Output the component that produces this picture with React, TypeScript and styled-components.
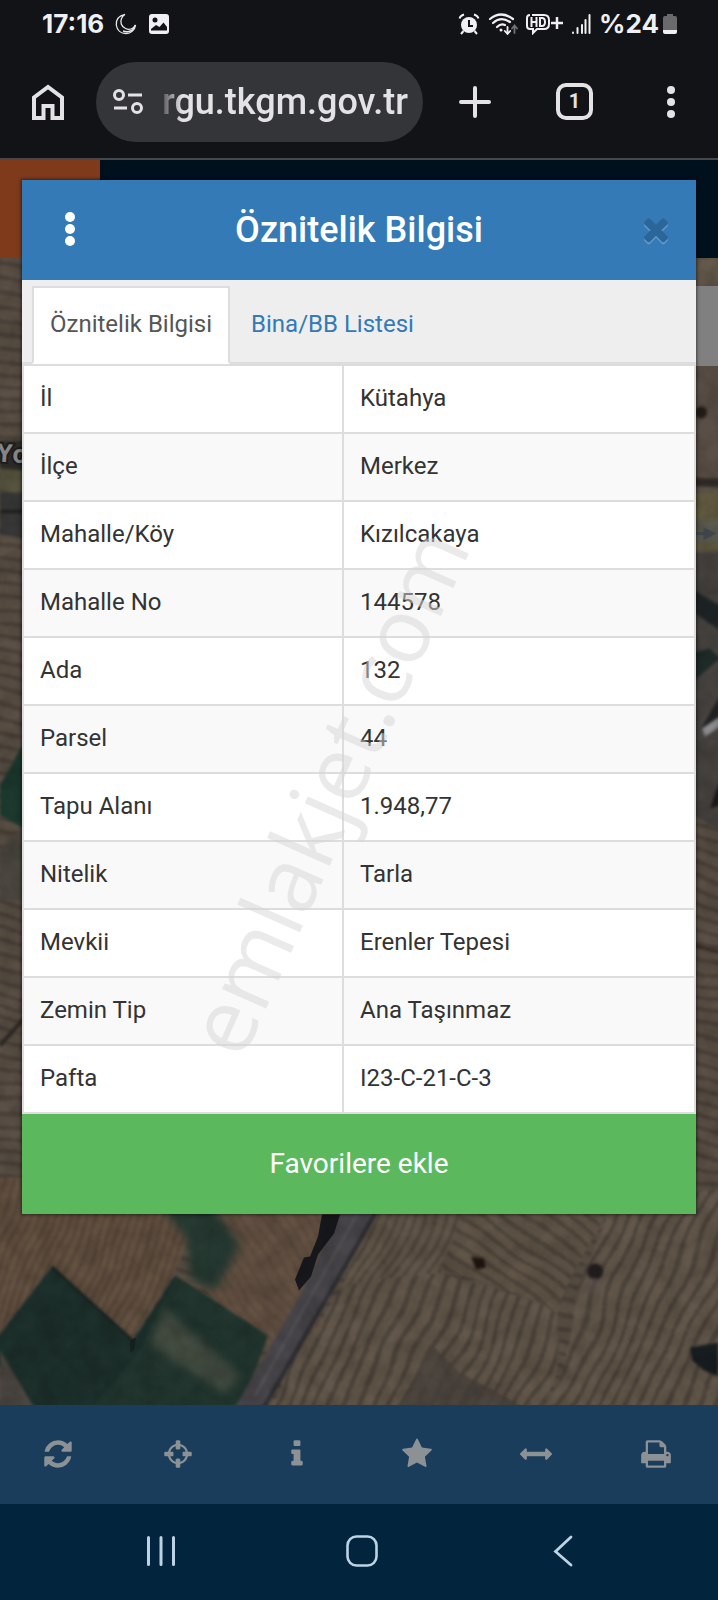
import { FC } from "react"
import styled, { createGlobalStyle } from 'styled-components';

type TProps = {
    d: string
    size?: number
}

const rows = [
    ['İl', 'Kütahya'],
    ['İlçe', 'Merkez'],
    ['Mahalle/Köy', 'Kızılcakaya'],
    ['Mahalle No', '144578'],
    ['Ada', '132'],
    ['Parsel', '44'],
    ['Tapu Alanı', '1.948,77'],
    ['Nitelik', 'Tarla'],
    ['Mevkii', 'Erenler Tepesi'],
    ['Zemin Tip', 'Ana Taşınmaz'],
    ['Pafta', 'I23-C-21-C-3'],
]

const closePath = "M1490 1322q0 40-28 68l-136 136q-28 28-68 28t-68-28l-294-294-294 294q-28 28-68 28t-68-28l-136-136q-28-28-28-68t28-68l294-294-294-294q-28-28-28-68t28-68l136-136q28-28 68-28t68 28l294 294 294-294q28-28 68-28t68 28l136 136q28 28 28 68t-28 68l-294 294 294 294q28 28 28 68z"

const tools = [
    { name: 'Yenile', d: "M1639 1056q0 5-1 7-64 268-268 434.5t-478 166.5q-146 0-282.5-55t-243.5-157l-129 129q-19 19-45 19t-45-19-19-45v-448q0-26 19-45t45-19h448q26 0 45 19t19 45-19 45l-137 137q71 66 161 102t187 36q134 0 250-65t186-179q11-17 53-117 8-23 30-23h192q13 0 22.5 9.5t9.5 22.5zm25-800v448q0 26-19 45t-45 19h-448q-26 0-45-19t-19-45 19-45l138-138q-148-137-349-137-134 0-250 65t-186 179q-11 17-53 117-8 23-30 23h-199q-13 0-22.5-9.5t-9.5-22.5v-7q65-268 270-434.5t480-166.5q146 0 284 55.5t245 156.5l130-129q19-19 45-19t45 19 19 45z" },
    { name: 'Konum', d: "M1325 1024h-109q-26 0-45-19t-19-45v-128q0-26 19-45t45-19h109q-32-108-112.5-188.5t-188.5-112.5v109q0 26-19 45t-45 19h-128q-26 0-45-19t-19-45v-109q-108 32-188.5 112.5t-112.5 188.5h109q26 0 45 19t19 45v128q0 26-19 45t-45 19h-109q32 108 112.5 188.5t188.5 112.5v-109q0-26 19-45t45-19h128q26 0 45 19t19 45v109q108-32 188.5-112.5t112.5-188.5zm339-192v128q0 26-19 45t-45 19h-143q-37 161-154.5 278.5t-278.5 154.5v143q0 26-19 45t-45 19h-128q-26 0-45-19t-19-45v-143q-161-37-278.5-154.5t-154.5-278.5h-143q-26 0-45-19t-19-45v-128q0-26 19-45t45-19h143q37-161 154.5-278.5t278.5-154.5v-143q0-26 19-45t45-19h128q26 0 45 19t19 45v143q161 37 278.5 154.5t154.5 278.5h143q26 0 45 19t19 45z" },
    { name: 'Bilgi', d: "M1216 1344v128q0 26-19 45t-45 19h-512q-26 0-45-19t-19-45v-128q0-26 19-45t45-19h64v-384h-64q-26 0-45-19t-19-45v-128q0-26 19-45t45-19h384q26 0 45 19t19 45v576h64q26 0 45 19t19 45zm-128-1152v192q0 26-19 45t-45 19h-256q-26 0-45-19t-19-45v-192q0-26 19-45t45-19h256q26 0 45 19t19 45z" },
    { name: 'Favoriler', d: "M1728 647q0 22-26 48l-363 354 86 500q1 7 1 20 0 21-10.5 35.5t-30.5 14.5q-19 0-40-12l-449-236-449 236q-22 12-40 12-21 0-31.5-14.5t-10.5-35.5q0-6 2-20l86-500-364-354q-25-27-25-48 0-37 56-46l502-73 225-455q19-41 49-41t49 41l225 455 502 73q56 9 56 46z" },
    { name: 'Ölçüm', d: "M1792 896q0 26-19 45l-256 256q-19 19-45 19t-45-19-19-45v-128h-1024v128q0 26-19 45t-45 19-45-19l-256-256q-19-19-19-45t19-45l256-256q19-19 45-19t45 19 19 45v128h1024v-128q0-26 19-45t45-19 45 19l256 256q19 19 19 45z" },
    { name: 'Yazdır', d: "M448 1536h896v-256h-896v256zm0-640h896v-384h-160q-40 0-68-28t-28-68v-160h-640v640zm1152 64q0-26-19-45t-45-19-45 19-19 45 19 45 45 19 45-19 19-45zm128 0v416q0 13-9.5 22.5t-22.5 9.5h-224v160q0 40-28 68t-68 28h-960q-40 0-68-28t-28-68v-160h-224q-13 0-22.5-9.5t-9.5-22.5v-416q0-79 56.5-135.5t135.5-56.5h64v-544q0-40 28-68t68-28h672q40 0 88 20t76 48l152 152q28 28 48 76t20 88v256h64q79 0 135.5 56.5t56.5 135.5z" },
]

const Icon: FC<TProps> = ({ d, size = 32 }) => (
    <svg width={size} height={size} viewBox="0 0 1792 1792" fill="currentColor" aria-hidden="true">
        <path d={d} />
    </svg>
)

const StatusIcons: FC = () => (
    <>
        <svg width="22" height="22" viewBox="0 0 22 22" fill="none" stroke="#e8e8ea">
            <path d="M10 1.500C3.500 2.500 .800 7 1.300 12C2 17.500 6 20.500 11 20.500C16 20.500 20 17 20.500 12C18 16 14 17 10.500 15.500C6 13.500 5 9 6.500 5.500C7.300 3.600 8.500 2.300 10 1.500z" strokeWidth="1.300" />
            <path d="M8 18Q17 21 20.500 12" strokeWidth="1.500" />
        </svg>
        <svg width="22" height="22" viewBox="0 0 22 22">
            <rect x="1" y="1" width="20" height="20" rx="3" fill="#f0f0f2" />
            <circle cx="7" cy="7" r="2.500" fill="#121316" />
            <path d="M3 17.500V16L8 12L11.500 14L15.500 9.500L19 14V17.500z" fill="#121316" />
        </svg>
    </>
)

const SignalIcons: FC = () => (
    <>
        <svg width="22" height="22" viewBox="0 0 22 22" fill="none" stroke="#f0f0f2" strokeWidth="2">
            <circle cx="11" cy="12" r="8" fill="#f0f0f2" stroke="none" />
            <path d="M11 7V13H15" stroke="#121316" />
            <path d="M1.500 5.500Q2.500 2.500 6 1.500M20.500 5.500Q19.500 2.500 16 1.500M5.500 18L3 21M16.500 18L19 21" />
        </svg>
        <svg width="30" height="24" viewBox="0 0 30 24" fill="none" stroke="#f0f0f2" strokeWidth="2.200" strokeLinecap="round">
            <path d="M2 7Q13 -2 25 7M5 11Q13 4 22 10M9 15Q13 11 17 13" />
            <circle cx="13" cy="18" r="1.500" fill="#f0f0f2" stroke="none" />
            <path d="M19.500 15V21.500M16.800 19L19.500 22L22.200 19" strokeWidth="1.800" />
            <path d="M26.500 21V14M24 16.500L26.500 13.500L29 16.500" stroke="#707174" strokeWidth="1.800" />
        </svg>
        <HdIcon>
            <svg width="24" height="22" viewBox="0 0 24 22" fill="none" stroke="#f0f0f2" strokeWidth="2">
                <path d="M6 2H18Q23 2 23 7V11Q23 16 18 16H11L7 20V16H4Q1 16 1 13V5Q1 2 4 2" />
                <path d="M5.500 4V14M10.500 4V14M5.500 9H10.500M14 5V13H16Q19 13 19 9Q19 5 16 5z" />
            </svg>
            <svg width="12" height="22" viewBox="0 0 12 22" stroke="#f0f0f2" strokeWidth="2.500">
                <path d="M0 10H12M6 4V16" />
            </svg>
        </HdIcon>
        <svg width="20" height="22" viewBox="0 0 20 22" stroke="#f0f0f2" strokeWidth="2" strokeLinecap="round">
            <path d="M2 19.500V20M6.500 15V20M11 12V20M14.500 7V20" />
            <path d="M18.500 2V20" />
        </svg>
    </>
)

const Battery: FC = () => (
    <svg width="16" height="22" viewBox="0 0 16 22">
        <path d="M5 1H11V3H13Q15 3 15 5V17H1V5Q1 3 3 3H5z" fill="#6a6a6d" />
        <path d="M1 17H15V19Q15 21 13 21H3Q1 21 1 19z" fill="#f0f0f2" />
    </svg>
)

type TFurrow = { id: string, angle: number, gap: number, color: string, base: string }
const furrows: TFurrow[] = [
    { id: 'f-a', angle: 20, gap: 8, color: '#544639', base: '#645140' },
    { id: 'f-b', angle: 28, gap: 9, color: '#4e443a', base: '#605548' },
    { id: 'f-c', angle: -52, gap: 12, color: '#4c433a', base: '#605547' },
    { id: 'f-d', angle: 24, gap: 13, color: '#494138', base: '#62574a' },
    { id: 'f-e', angle: 100, gap: 13, color: '#483f37', base: '#5a5045' },
    { id: 'f-f', angle: -35, gap: 9, color: '#5b4b3e', base: '#635142' },
]

// darkened aerial view behind the dialog
const Satellite: FC = () => (
    <MapDrawing viewBox="0 257 718 1148" preserveAspectRatio="xMidYMid slice" aria-hidden="true">
        <defs>
            {furrows.map((f) => (
                <pattern key={f.id} id={f.id} width={f.gap} height={f.gap} patternUnits="userSpaceOnUse" patternTransform={`rotate(${f.angle})`}>
                    <rect width={f.gap} height={f.gap} fill={f.base} />
                    <rect width={f.gap / 3} height={f.gap} fill={f.color} opacity=".8" />
                </pattern>
            ))}
            <filter id="wave" x="-5%" y="-5%" width="110%" height="110%" colorInterpolationFilters="sRGB">
                <feTurbulence type="fractalNoise" baseFrequency=".01" numOctaves="2" seed="4" result="n" />
                <feDisplacementMap in="SourceGraphic" in2="n" scale="26" xChannelSelector="R" yChannelSelector="G" result="d" />
                <feGaussianBlur in="d" stdDeviation="1" />
            </filter>
            <filter id="edge" x="-10%" y="-10%" width="120%" height="120%" colorInterpolationFilters="sRGB">
                <feGaussianBlur stdDeviation="1.500" />
            </filter>
            <filter id="soft" x="-10%" y="-10%" width="120%" height="120%" colorInterpolationFilters="sRGB">
                <feGaussianBlur stdDeviation="4" />
            </filter>
            <filter id="grain" x="0" y="0" width="100%" height="100%" colorInterpolationFilters="sRGB">
                <feTurbulence type="fractalNoise" baseFrequency=".05" numOctaves="3" seed="8" />
                <feColorMatrix values="0 0 0 0 0  0 0 0 0 0  0 0 0 0 0  .9 0 0 0 -.25" />
            </filter>
        </defs>
        <g filter="url(#wave)">
            <rect x="-20" y="240" width="760" height="1190" fill="url(#f-e)" />
            <path d="M-20 1180H170L190 1240L135 1340L55 1270L-20 1360z" fill="url(#f-a)" />
            <path d="M190 1190H350L310 1340L270 1350L205 1290L240 1245z" fill="url(#f-f)" />
            <path d="M360 1190H470L440 1280L340 1290z" fill="url(#f-b)" />
            <path d="M470 1190H610L560 1315L440 1260z" fill="url(#f-c)" />
            <path d="M610 1190H740V1430H540z" fill="url(#f-d)" />
            <path d="M340 1285L440 1265L560 1315L540 1430H250z" fill="url(#f-d)" />
            <path d="M430 1345L540 1420H390z" fill="#4a443d" opacity=".8" />
        </g>
        <g filter="url(#soft)">
            <path d="M158 1200H208L240 1245L215 1290L190 1278L187 1240z" fill="#263a32" />
        </g>
        <g filter="url(#edge)">
            <path d="M52 1266L133 1340L175 1275L268 1335L255 1370L235 1410H30L-5 1360V1340z" fill="#1d302b" />
            <path d="M175 1277L268 1335L240 1410H90L140 1350z" fill="#243831" opacity=".8" />
            <path d="M0 1350L36 1410H0z" fill="#4b4641" />
            <path d="M345 1200H384L264 1410H233L300 1295z" fill="#48464a" />
            <path d="M380 1205L262 1410" stroke="#2d2d34" strokeWidth="4" />
            <path d="M362 1205L255 1395" stroke="#59575a" strokeWidth="2" />
            <path d="M52 1266L133 1340" stroke="#141d1c" strokeWidth="2" />
        </g>
        <g filter="url(#soft)">
            <path d="M165 1308L240 1375L225 1392L150 1345z" fill="#434c41" />
        </g>
        <path d="M322 1214H340L334 1233L318 1254L311 1276L299 1290L295 1279L304 1257L310 1256L318 1236z" fill="#18191c" />
        <path d="M130 1340L136 1337L134 1350L130 1352z" fill="#17231f" />
        <g filter="url(#edge)">
            <path d="M471 1256L484 1258L486 1267L476 1269z" fill="#1f1510" />
            <circle cx="595" cy="1271" r="8" fill="#231f1f" />
            <path d="M690 1347L718 1342V1376L704 1370L692 1360z" fill="#171d20" />
            <circle cx="594" cy="1285" r="8" fill="#5f5453" opacity=".5" />
        </g>
        <g filter="url(#edge)">
            <path d="M0 440H24V472H0z" fill="#2e2d2a" />
            <path d="M0 468L24 470V495L0 490z" fill="#58553f" />
            <path d="M0 492H24V538L0 534z" fill="#373738" />
            <path d="M0 511H24" stroke="#1d1d1e" strokeWidth="3" />
            <path d="M24 742L0 785V815L24 828z" fill="#1d392f" />
            <path d="M0 850L24 825V900H0z" fill="#4b4740" />
            <path d="M0 1045L24 1018" stroke="#2c2722" strokeWidth="4" />
            <path d="M694 257H720V287H694z" fill="#64594b" />
            <path d="M694 362H720V475H694z" fill="#5a4f46" />
            <circle cx="701" cy="412" r="6" fill="#241e19" />
            <path d="M694 478H720V486H694z" fill="#2f2b27" />
            <path d="M694 492H720V550H694z" fill="#5f583f" />
            <path d="M694 520H720V542H694z" fill="#5c5b50" />
            <path d="M694 552H720V830L694 815z" fill="#46433f" />
            <path d="M694 590L720 605V630L694 612z" fill="#1f2527" />
            <path d="M694 652L710 648L720 658L694 680z" fill="#1f2b29" />
            <path d="M720 695L700 730L720 722z" fill="#202224" />
            <path d="M702 728L720 716V726L705 736z" fill="#8b8c8e" />
            <path d="M720 780L710 808L720 805z" fill="#1d1b1b" />
            <path d="M694 945L720 952" stroke="#352c25" strokeWidth="3" />
        </g>
        <path d="M694 533H706M705 529L713 533L705 537z" stroke="#474c53" strokeWidth="3" fill="#474c53" />
        <rect x="0" y="257" width="718" height="1148" filter="url(#grain)" opacity=".3" />
        <RoadLabel x="-4" y="461" transform="rotate(4 0 463)">Yo</RoadLabel>
    </MapDrawing>
)

type TDotsProps = { r: number, gap: number }
const Dots: FC<TDotsProps> = ({ r, gap }) => (
    <svg width="12" height="36" viewBox="-6 -18 12 36" fill="currentColor" aria-hidden="true">
        <circle cy={-gap} r={r} />
        <circle r={r} />
        <circle cy={gap} r={r} />
    </svg>
)

const App: FC = () => {
    return (
        <Screen>
            <GlobalStyle />
            <StatusBar>
                <StatusGroup $gap={11}>
                    <StatusText>17:16</StatusText>
                    <StatusIcons />
                </StatusGroup>
                <StatusGroup $gap={8}>
                    <SignalIcons />
                    <StatusGroup $gap={3}>
                        <StatusText>%24</StatusText>
                        <Battery />
                    </StatusGroup>
                </StatusGroup>
            </StatusBar>
            <BrowserBar>
                <BarButton aria-label="Ana sayfa">
                    <svg width="34" height="38" viewBox="0 0 34 38" fill="none" stroke="currentColor" strokeWidth="4">
                        <path d="M3 35V14.500L17 4L31 14.500V35H21.500V23H12.500V35z" />
                    </svg>
                </BarButton>
                <AddressBar>
                    <svg width="32" height="28" viewBox="0 0 32 28" fill="none" stroke="#e3e3e6" strokeWidth="3">
                        <circle cx="7" cy="7" r="4.500" />
                        <path d="M16 7H30M2 20H15" />
                        <circle cx="25" cy="20" r="4.500" />
                    </svg>
                    <AddressInput aria-label="Adres" defaultValue="rgu.tkgm.gov.tr" />
                </AddressBar>
                <BarButton aria-label="Yeni sekme">
                    <svg width="32" height="32" viewBox="0 0 32 32" stroke="currentColor" strokeWidth="4" strokeLinecap="round">
                        <path d="M2 16H30M16 2V30" />
                    </svg>
                </BarButton>
                <BarButton aria-label="Sekmeler">
                    <TabCount>1</TabCount>
                </BarButton>
                <BarButton aria-label="Menü">
                    <Dots r={4} gap={12} />
                </BarButton>
            </BrowserBar>
            <Page>
                <Backdrop>
                    <SiteHeader>
                        <SiteMenu />
                    </SiteHeader>
                    <MapArea>
                        <Satellite />
                        <MapPanel />
                    </MapArea>
                    <Toolbar>
                        {tools.map((tool) => (
                            <ToolButton key={tool.name} aria-label={tool.name}>
                                <Icon d={tool.d} />
                            </ToolButton>
                        ))}
                    </Toolbar>
                </Backdrop>
                <Dialog role="dialog" aria-labelledby="dialog-title">
                    <DialogHeader>
                        <HeaderButton aria-label="Seçenekler">
                            <Dots r={5} gap={12} />
                        </HeaderButton>
                        <DialogTitle id="dialog-title">Öznitelik Bilgisi</DialogTitle>
                        <CloseButton aria-label="Kapat">
                            <Icon d={closePath} size={36} />
                        </CloseButton>
                    </DialogHeader>
                    <TabList role="tablist">
                        <Tab role="tab" aria-selected="true" $active>Öznitelik Bilgisi</Tab>
                        <Tab role="tab" aria-selected="false">Bina/BB Listesi</Tab>
                    </TabList>
                    <InfoTable>
                        <tbody>
                            {rows.map(([label, value]) => (
                                <InfoRow key={label}>
                                    <InfoLabel scope="row">{label}</InfoLabel>
                                    <InfoValue>{value}</InfoValue>
                                </InfoRow>
                            ))}
                        </tbody>
                    </InfoTable>
                    <FavoriteButton>Favorilere ekle</FavoriteButton>
                    <Watermark>emlakjet.com</Watermark>
                </Dialog>
            </Page>
            <SystemNav>
                <NavButton aria-label="Son uygulamalar">
                    <svg width="32" height="32" viewBox="0 0 32 32" stroke="currentColor" strokeWidth="3" strokeLinecap="round">
                        <path d="M3.500 2.500V29.500M16 2.500V29.500M28.500 2.500V29.500" />
                    </svg>
                </NavButton>
                <NavButton aria-label="Ana ekran">
                    <svg width="32" height="32" viewBox="0 0 32 32" fill="none" stroke="currentColor" strokeWidth="2.600">
                        <rect x="1.500" y="1.500" width="29" height="29" rx="9" />
                    </svg>
                </NavButton>
                <NavButton aria-label="Geri">
                    <svg width="32" height="32" viewBox="0 0 32 32" fill="none" stroke="currentColor" strokeWidth="2.800" strokeLinecap="round">
                        <path d="M24 2L8.500 16.500L24 30" />
                    </svg>
                </NavButton>
            </SystemNav>
        </Screen>
    )
}

export default App

const GlobalStyle = createGlobalStyle`
    * {
        box-sizing: border-box;
    }
    body {
        margin: 0;
        background: #121316;
        font-family: Roboto, "Liberation Sans", sans-serif;
    }
    button {
        font-family: inherit;
        border: none;
        background: none;
        padding: 0;
        cursor: pointer;
    }
    svg {
        display: block;
    }
`

const Screen = styled.div`
    min-height: 100vh;
    display: flex;
    flex-direction: column;
`

const StatusBar = styled.div`
    height: 47px;
    padding: 0 40px 0 42px;
    display: flex;
    align-items: center;
    justify-content: space-between;
    background: #121316;
`
const StatusGroup = styled.div<{ $gap: number }>`
    display: flex;
    align-items: center;
    gap: ${({ $gap }) => $gap}px;
`
const StatusText = styled.span`
    font-family: Inter, sans-serif;
    font-size: 26px;
    line-height: 32px;
    font-weight: 700;
    color: #f0f0f2;
`
const HdIcon = styled.span`
    display: flex;
    gap: 1px;
`

const BrowserBar = styled.div`
    height: 113px;
    padding-bottom: 2px;
    display: grid;
    grid-template-columns: 96px minmax(0, 1fr) 103px 97px 95px;
    align-items: center;
    background: #121316;
    border-bottom: 2px solid #48484a;
`
const BarButton = styled.button`
    display: flex;
    align-items: center;
    justify-content: center;
    height: 80px;
    color: #e3e3e6;
`
const AddressBar = styled.div`
    height: 80px;
    padding: 0 12px 0 16px;
    display: flex;
    align-items: center;
    gap: 18px;
    border-radius: 40px;
    background: #343538;
`
const AddressInput = styled.input`
    flex: 1;
    min-width: 0;
    padding: 0;
    border: none;
    outline: none;
    background: none;
    font-family: Roboto, "Liberation Sans", sans-serif;
    font-size: 36px;
    line-height: 48px;
    font-weight: 500;
    color: #e3e3e6;
    mask-image: linear-gradient(90deg, rgba(0, 0, 0, .2), #000 20px);
`
const TabCount = styled.span`
    width: 37px;
    height: 37px;
    border: 4px solid #e3e3e6;
    border-radius: 10px;
    font-size: 20px;
    line-height: 29px;
    font-weight: 700;
    text-align: center;
`

const Page = styled.div`
    flex: 1;
    display: grid;
    grid-template-columns: minmax(0, 1fr);
`
const Backdrop = styled.div`
    grid-area: 1 / 1;
    display: flex;
    flex-direction: column;
`
const SiteHeader = styled.div`
    height: 98px;
    background: #00101c;
`
const SiteMenu = styled.div`
    width: 100px;
    height: 100%;
    background: #7f3a1b;
`
const MapArea = styled.div`
    flex: 1;
    position: relative;
    overflow: hidden;
    background: #594f44;
`
const MapDrawing = styled.svg`
    position: absolute;
    width: 100%;
    height: 100%;
`
const MapPanel = styled.div`
    position: absolute;
    top: 28px;
    right: 0;
    width: 60px;
    height: 80px;
    background: #808080;
`
const RoadLabel = styled.text`
    font-family: "Open Sans", sans-serif;
    font-size: 25px;
    font-weight: 700;
    fill: #858585;
    stroke: #1c1c1c;
    stroke-width: 4px;
    paint-order: stroke;
`
const Toolbar = styled.div`
    height: 99px;
    padding: 0 46px 2px 42px;
    display: flex;
    justify-content: space-between;
    background: #1a3d5b;
`
const ToolButton = styled.button`
    display: flex;
    align-items: center;
    justify-content: center;
    width: 32px;
    color: #8c9196;
`

const Dialog = styled.div`
    grid-area: 1 / 1;
    align-self: start;
    position: relative;
    margin: 20px 22px 191px;
    overflow: hidden;
    background: #fff;
    box-shadow: 0 0 3px 1px rgba(0, 0, 0, .5);
`
const DialogHeader = styled.div`
    height: 100px;
    padding-bottom: 2px;
    display: grid;
    grid-template-columns: 96px 1fr 80px;
    align-items: center;
    background: #337ab7;
    color: #fff;
`
const HeaderButton = styled.button`
    display: flex;
    justify-content: center;
    color: #fff;
`
const CloseButton = styled(HeaderButton)`
    color: #2c6698;
    filter: drop-shadow(0 2px 0 #5f9bcd);
`
const DialogTitle = styled.h4`
    margin: 0;
    padding: 2px 16px 0 0;
    font-size: 36px;
    line-height: 40px;
    font-weight: 500;
    text-align: center;
`
const TabList = styled.div`
    display: flex;
    gap: 3px;
    padding: 6px 10px 0;
    background: #eee;
    border-bottom: 2px solid #ddd;
`
const Tab = styled.button<{ $active?: boolean }>`
    margin-bottom: -2px;
    height: 78px;
    padding: 0 16px 2px;
    border: 2px solid ${({ $active }) => $active ? '#ddd' : 'transparent'};
    border-bottom-color: ${({ $active }) => $active ? '#fff' : 'transparent'};
    background: ${({ $active }) => $active ? '#fff' : 'transparent'};
    color: ${({ $active }) => $active ? '#555' : '#337ab7'};
    font-size: 24px;
    line-height: 34px;
`
const InfoTable = styled.table`
    width: 100%;
    border-collapse: collapse;
    table-layout: fixed;
    font-size: 24px;
    line-height: 34px;
    color: #333;
`
const InfoRow = styled.tr`
    &:nth-child(even) {
        background: #f9f9f9;
    }
`
const InfoLabel = styled.th`
    width: 320px;
    height: 68px;
    padding: 0 16px 2px;
    border: 2px solid #ddd;
    font-weight: 400;
    text-align: left;
`
const InfoValue = styled.td`
    padding: 0 16px 2px;
    border: 2px solid #ddd;
`
const FavoriteButton = styled.button`
    display: block;
    width: 100%;
    height: 100px;
    background: #5cb85c;
    color: #fff;
    font-size: 28px;
    line-height: 40px;
`
// diagonal brand mark over the table
const Watermark = styled.div`
    position: absolute;
    top: 59%;
    left: 45%;
    transform: translate(-50%, -50%) rotate(-66deg);
    font-family: "Open Sans", "Noto Sans", sans-serif;
    font-size: 90px;
    line-height: 90px;
    white-space: nowrap;
    color: rgba(214, 214, 214, .5);
    pointer-events: none;
`

const SystemNav = styled.div`
    height: 96px;
    padding: 0 55px 2px 60px;
    display: grid;
    grid-template-columns: repeat(3, 1fr);
    background: #02243c;
`
const NavButton = styled.button`
    display: flex;
    align-items: center;
    justify-content: center;
    color: #bcd3e5;
`
